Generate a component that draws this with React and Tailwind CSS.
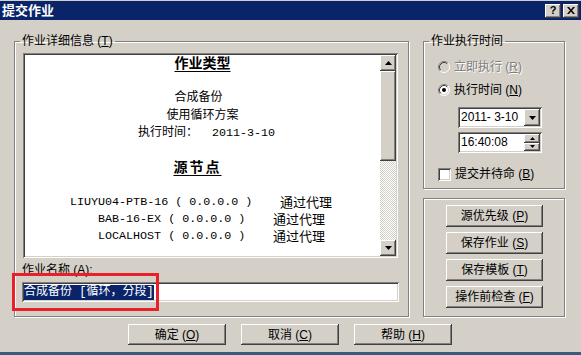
import React from 'react';

// Win2000 classic bevels
const raised =
  'bg-[#d4d0c8] shadow-[inset_-1px_-1px_#404040,inset_1px_1px_#fff,inset_-2px_-2px_#808080,inset_2px_2px_#d4d0c8]';
const sunken =
  'bg-white shadow-[inset_1px_1px_#808080,inset_-1px_-1px_#fff,inset_2px_2px_#404040,inset_-2px_-2px_#d4d0c8]';
const groove = 'border border-[#808080] shadow-[inset_1px_1px_#fff,1px_1px_#fff]';
const mono = "font-['Liberation_Mono','Noto_Sans_CJK_SC',monospace]";

const Radio = ({ checked, disabled }) => (
  <svg width="12" height="12" viewBox="0 0 12 12" className="shrink-0">
    <circle cx="6" cy="6" r="5" fill={disabled ? '#d4d0c8' : '#fff'} />
    <path d="M2.11 9.89 A5.5 5.5 0 0 1 9.89 2.11" stroke="#808080" fill="none" />
    <path d="M9.89 2.11 A5.5 5.5 0 0 1 2.11 9.89" stroke="#fff" fill="none" />
    <path d="M2.82 9.18 A4.5 4.5 0 0 1 9.18 2.82" stroke="#404040" fill="none" />
    <path d="M9.18 2.82 A4.5 4.5 0 0 1 2.82 9.18" stroke="#d4d0c8" fill="none" />
    {checked && <circle cx="6" cy="6" r="2" fill="#000" />}
  </svg>
);

const Arrow = ({ down }) => (
  <svg width="7" height="4" viewBox="0 0 7 4">
    <path d={down ? 'M0 0h7L3.5 4z' : 'M0 4h7L3.5 0z'} fill="#000" />
  </svg>
);

const Btn = ({ label, k, w = 'w-[97px]', h = 'h-[22px]' }) => (
  <div className={`${raised} ${w} ${h} flex items-center justify-center text-[12px] text-black`}>
    {label} (<u>{k}</u>)
  </div>
);

export default function App() {
  return (
    <div className="relative w-[581px] h-[355px] overflow-hidden bg-[#d4d0c8] flex flex-col font-['Liberation_Sans','Noto_Sans_CJK_SC',sans-serif] text-black">
      {/* title bar */}
      <div className="mt-px h-[19px] bg-[#0a246a] flex items-center pr-[2px]">
        <span className="pl-[2px] text-[13px] font-bold text-white leading-[19px]">提交作业</span>
        <div className="ml-auto flex gap-[2px]">
          <div className={`${raised} w-[16px] h-[14px] flex items-center justify-center text-[11px] font-bold leading-none`}>?</div>
          <div className={`${raised} w-[16px] h-[14px] flex items-center justify-center`}>
            <svg width="8" height="7" viewBox="0 0 8 7">
              <path d="M0 0h2l2 2.5L6 0h2L5 3.5 8 7H6L4 4.5 2 7H0l3-3.5z" fill="#000" />
            </svg>
          </div>
        </div>
      </div>

      <div className="flex mt-[14px]">
        {/* left group */}
        <fieldset className={`${groove} ml-[14px] w-[394px] h-[283px] pl-[8px] pr-[9px] pt-[5px]`}>
          <legend className="-ml-[3px] px-[2px] text-[12px] leading-[14px]">
            作业详细信息 (<u>T</u>)
          </legend>
          <div className={`${sunken} w-[375px] h-[205px] p-[2px] flex`}>
            <div className="flex-1 overflow-hidden text-[12px]">
              <div className="text-center leading-[17.2px] text-[14px] font-bold underline decoration-1 underline-offset-[3px]">作业类型</div>
              <div className="h-[17.2px]" />
              <div className="text-center leading-[17.2px] pr-[8px]">合成备份</div>
              <div className="text-center leading-[17.2px]">使用循环方案</div>
              <div className="text-center leading-[17.2px] pl-[8px]">
                执行时间：<span className={`${mono} text-[11.7px] whitespace-pre`}>  2011-3-10</span>
              </div>
              <div className="h-[17.2px]" />
              <div className="text-center leading-[17.2px] pr-[10px] text-[14px] font-bold underline decoration-1 underline-offset-[3px] tracking-[2px]">源节点</div>
              <div className="h-[17.2px]" />
              <div className="flex leading-[17.2px] pl-[45px]">
                <span className={`${mono} w-[210px] text-[11.7px] whitespace-pre`}>LIUYU04-PTB-16 ( 0.0.0.0 )</span>
                <span className="text-[13px]">通过代理</span>
              </div>
              <div className="flex leading-[17.2px] pl-[73px]">
                <span className={`${mono} w-[175px] text-[11.7px] whitespace-pre`}>BAB-16-EX ( 0.0.0.0 )</span>
                <span className="text-[13px]">通过代理</span>
              </div>
              <div className="flex leading-[17.2px] pl-[73px]">
                <span className={`${mono} w-[175px] text-[11.7px] whitespace-pre`}>LOCALHOST ( 0.0.0.0 )</span>
                <span className="text-[13px]">通过代理</span>
              </div>
            </div>
            {/* scrollbar */}
            <div className="w-[16px] flex flex-col">
              <div className={`${raised} h-[16px] flex items-center justify-center`}><Arrow /></div>
              <div className={`${raised} h-[90px]`} />
              <div className="flex-1 bg-[repeating-conic-gradient(#d4d0c8_0_25%,#fff_0_50%)] bg-[length:2px_2px]" />
              <div className={`${raised} h-[16px] flex items-center justify-center`}><Arrow down /></div>
            </div>
          </div>
          <div className="mt-[5px] -ml-px text-[12px] leading-[14px]">
            作业名称 (<u>A</u>):
          </div>
          <div className={`${sunken} -ml-px mt-[5px] w-[377px] h-[20px] p-[2px] flex items-center`}>
            <span className={`${mono} bg-[#0a246a] text-white text-[12px] leading-[15px]`}>合成备份 [循环，分段]</span>
          </div>
        </fieldset>

        {/* right column */}
        <div className="ml-[14px] w-[142px] flex flex-col">
          <fieldset className={`${groove} h-[155px] pl-[14px] pt-[11px]`}>
            <legend className="-ml-[9px] px-[2px] text-[12px] leading-[14px]">作业执行时间</legend>
            <div className="h-[16px] flex items-center gap-[4px] text-[12px] text-[#808080] [text-shadow:1px_1px_#fff]">
              <Radio disabled />
              <span>立即执行 (<u>R</u>)</span>
            </div>
            <div className="mt-[7px] h-[16px] flex items-center gap-[4px] text-[12px]">
              <Radio checked />
              <span>执行时间 (<u>N</u>)</span>
            </div>
            <div className={`${sunken} ml-[20px] mt-[9px] w-[84px] h-[21px] p-[2px] flex`}>
              <span className="flex-1 pl-[1px] text-[12px] leading-[17px] whitespace-pre">2011- 3-10</span>
              <div className={`${raised} w-[16px] flex items-center justify-center`}><Arrow down /></div>
            </div>
            <div className={`${sunken} ml-[20px] mt-[4px] w-[84px] h-[21px] p-[2px] flex`}>
              <span className="flex-1 pl-[1px] text-[12px] leading-[17px]">16:40:08</span>
              <div className="w-[16px] flex flex-col">
                <div className={`${raised} flex-1 flex items-center justify-center`}>
                  <svg width="5" height="3" viewBox="0 0 5 3"><path d="M0 3h5L2.5 0z" fill="#000" /></svg>
                </div>
                <div className={`${raised} flex-1 flex items-center justify-center`}>
                  <svg width="5" height="3" viewBox="0 0 5 3"><path d="M0 0h5L2.5 3z" fill="#000" /></svg>
                </div>
              </div>
            </div>
            <div className="mt-[13px] h-[16px] flex items-center gap-[4px] text-[12px]">
              <div className={`${sunken} w-[13px] h-[13px] shrink-0`} />
              <span>提交并待命 (<u>B</u>)</span>
            </div>
          </fieldset>

          <fieldset className={`${groove} mt-[9px] h-[119px] pl-[22px] pt-[6px] flex flex-col gap-[5px]`}>
            <Btn label="源优先级" k="P" />
            <Btn label="保存作业" k="S" />
            <Btn label="保存模板" k="T" />
            <Btn label="操作前检查" k="F" />
          </fieldset>
        </div>
      </div>

      {/* dialog buttons */}
      <div className="ml-[128px] mt-[7px] flex gap-[15px]">
        <Btn label="确定" k="O" w="w-[98px]" h="h-[21px]" />
        <Btn label="取消" k="C" w="w-[98px]" h="h-[21px]" />
        <Btn label="帮助" k="H" w="w-[98px]" h="h-[21px]" />
      </div>

      <div className="mt-auto h-[3px] bg-[#3a5a80]" />

      {/* red annotation box */}
      <div className="absolute left-[12px] top-[273px] w-[147px] h-[38px] border-[3px] border-[#e8202a]" />
    </div>
  );
}
